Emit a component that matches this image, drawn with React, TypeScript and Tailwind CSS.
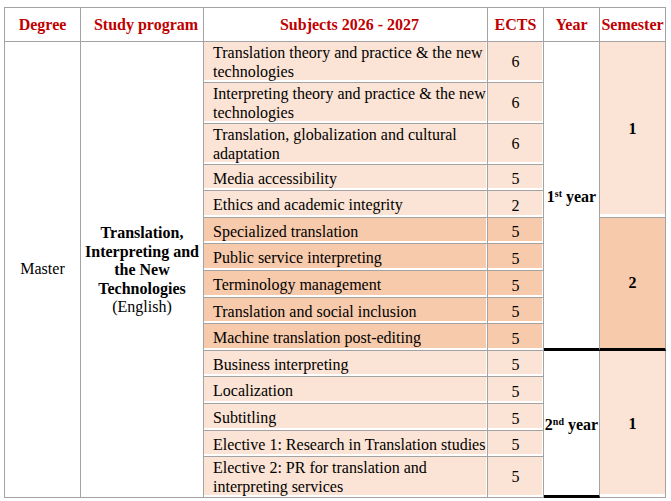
import React from "react";

const light = "bg-[#fbe4d5]";
const dark = "bg-[#f7caac]";

type Subject = { lines: string[]; ects: number; tone: "light" | "dark" };

const subjects: Subject[] = [
  { lines: ["Translation theory and practice & the new", "technologies"], ects: 6, tone: "light" },
  { lines: ["Interpreting theory and practice & the new", "technologies"], ects: 6, tone: "light" },
  { lines: ["Translation, globalization and cultural", "adaptation"], ects: 6, tone: "light" },
  { lines: ["Media accessibility"], ects: 5, tone: "light" },
  { lines: ["Ethics and academic integrity"], ects: 2, tone: "light" },
  { lines: ["Specialized translation"], ects: 5, tone: "dark" },
  { lines: ["Public service interpreting"], ects: 5, tone: "dark" },
  { lines: ["Terminology management"], ects: 5, tone: "dark" },
  { lines: ["Translation and social inclusion"], ects: 5, tone: "dark" },
  { lines: ["Machine translation post-editing"], ects: 5, tone: "dark" },
  { lines: ["Business interpreting"], ects: 5, tone: "light" },
  { lines: ["Localization"], ects: 5, tone: "light" },
  { lines: ["Subtitling"], ects: 5, tone: "light" },
  { lines: ["Elective 1: Research in Translation studies"], ects: 5, tone: "light" },
  { lines: ["Elective 2: PR for translation and", "interpreting services"], ects: 5, tone: "light" },
];

const cell = "flex items-center border-r border-b border-[#a3a3a3]";
const fillGap = "shadow-[inset_-1px_-2px_0_#ffffff]";

function Head({ children, indent }: { children: React.ReactNode; indent?: boolean }) {
  return (
    <div
      className={`${cell} justify-center bg-white font-bold text-[#c00000] whitespace-nowrap ${
        indent ? "pl-[8px]" : ""
      }`}
    >
      <span className="mt-[2px]">{children}</span>
    </div>
  );
}

function YearCell({ n, sup, span }: { n: string; sup: string; span: "ten" | "five" }) {
  return (
    <div
      className={`${cell} justify-center bg-white font-bold whitespace-nowrap border-b-[3px] border-b-black ${
        span === "ten" ? "row-span-10" : "row-span-5"
      }`}
    >
      <span className="mt-[5px]">
        {n}
        <sup className="text-[10px]">{sup}</sup>
        &nbsp;year
      </span>
    </div>
  );
}

function SemesterCell({ n, tone, thick }: { n: string; tone: "light" | "dark"; thick?: boolean }) {
  return (
    <div
      className={`${cell} row-span-5 justify-center font-bold ${tone === "light" ? light : dark} ${
        thick ? "border-b-[3px] border-b-black" : "shadow-[inset_0_-3px_0_#ffffff]"
      }`}
    >
      <span>{n}</span>
    </div>
  );
}

export default function App() {
  return (
    <div className="min-h-screen bg-white font-[family-name:'Liberation_Serif',serif] text-[16px] leading-[18.4px] text-black">
      <div className="ml-[4px] mt-[7px] inline-grid grid-cols-[76px_123px_284px_56px_56px_66px] grid-rows-[34px_41px_41px_41px_26px_27px_26px_27px_27px_26px_27px_26px_27px_27px_26px_41px] border-l border-t border-[#a3a3a3]">
        <Head>Degree</Head>
        <Head indent>Study program</Head>
        <Head indent>Subjects 2026 - 2027</Head>
        <Head>ECTS</Head>
        <Head>Year</Head>
        <Head>Semester</Head>

        <div className={`${cell} row-span-15 justify-center bg-white`}>Master</div>
        <div className={`${cell} row-span-15 justify-center bg-white text-center`}>
          <div className="mt-[2px]">
            <b>
              Translation,
              <br />
              Interpreting and
              <br />
              the New
              <br />
              Technologies
            </b>
            <br />
            (English)
          </div>
        </div>

        {subjects.map((s, i) => {
          const bg = s.tone === "light" ? light : dark;
          const twoLine = s.lines.length > 1;
          return (
            <React.Fragment key={i}>
              <div className={`${cell} ${bg} ${fillGap} pl-[9px] whitespace-nowrap`}>
                <div className={twoLine ? "mt-[1px]" : "mt-[3px]"}>
                  {s.lines.map((l, j) => (
                    <div key={j}>{l}</div>
                  ))}
                </div>
              </div>
              <div className={`${cell} ${bg} ${fillGap} justify-center`}>
                <span className={twoLine ? "mt-[1px]" : "mt-[4px]"}>{s.ects}</span>
              </div>
              {i === 0 && <YearCell n="1" sup="st" span="ten" />}
              {i === 0 && <SemesterCell n="1" tone="light" />}
              {i === 5 && <SemesterCell n="2" tone="dark" thick />}
              {i === 10 && <YearCell n="2" sup="nd" span="five" />}
              {i === 10 && <SemesterCell n="1" tone="light" />}
            </React.Fragment>
          );
        })}
      </div>
    </div>
  );
}
